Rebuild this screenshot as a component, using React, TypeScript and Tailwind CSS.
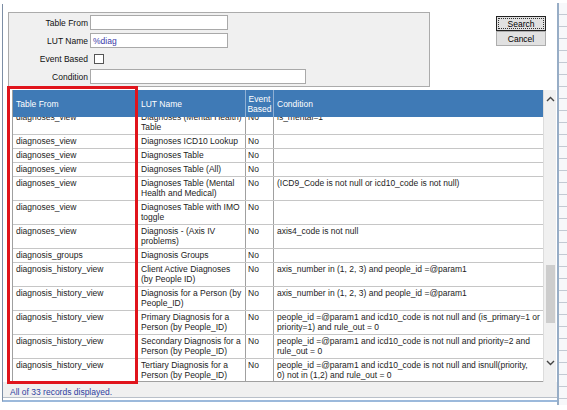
import React from 'react';

type Row = { table: string; lut: string; event: string; cond: string };

const rows: Row[] = [
  { table: 'diagnoses_view', lut: 'Diagnoses (Mental Health) Table', event: 'No', cond: 'is_mental=1' },
  { table: 'diagnoses_view', lut: 'Diagnoses ICD10 Lookup', event: 'No', cond: '' },
  { table: 'diagnoses_view', lut: 'Diagnoses Table', event: 'No', cond: '' },
  { table: 'diagnoses_view', lut: 'Diagnoses Table (All)', event: 'No', cond: '' },
  {
    table: 'diagnoses_view',
    lut: 'Diagnoses Table (Mental Health and Medical)',
    event: 'No',
    cond: '(ICD9_Code is not null or icd10_code is not null)',
  },
  { table: 'diagnoses_view', lut: 'Diagnoses Table with IMO toggle', event: 'No', cond: '' },
  { table: 'diagnoses_view', lut: 'Diagnosis - (Axis IV problems)', event: 'No', cond: 'axis4_code is not null' },
  { table: 'diagnosis_groups', lut: 'Diagnosis Groups', event: 'No', cond: '' },
  {
    table: 'diagnosis_history_view',
    lut: 'Client Active Diagnoses (by People ID)',
    event: 'No',
    cond: 'axis_number in (1, 2, 3) and people_id =@param1',
  },
  {
    table: 'diagnosis_history_view',
    lut: 'Diagnosis for a Person (by People_ID)',
    event: 'No',
    cond: 'axis_number in (1, 2, 3) and people_id =@param1',
  },
  {
    table: 'diagnosis_history_view',
    lut: 'Primary Diagnosis for a Person (by People_ID)',
    event: 'No',
    cond: 'people_id =@param1 and icd10_code is not null and (is_primary=1 or priority=1) and rule_out = 0',
  },
  {
    table: 'diagnosis_history_view',
    lut: 'Secondary Diagnosis for a Person (by People_ID)',
    event: 'No',
    cond: 'people_id =@param1 and icd10_code is not null and priority=2 and rule_out = 0',
  },
  {
    table: 'diagnosis_history_view',
    lut: 'Tertiary Diagnosis for a Person (by People_ID)',
    event: 'No',
    cond: 'people_id =@param1 and icd10_code is not null and isnull(priority,\n0) not in (1,2) and rule_out = 0',
  },
];

const Field = ({ label, children }: { label: string; children: React.ReactNode }) => (
  <div className="flex items-center h-[15px]">
    <span className="w-[81px] text-right pr-[2px] text-[#111]">{label}</span>
    {children}
  </div>
);

export default function App() {
  return (
    <div className="relative w-[567px] h-[410px] bg-white overflow-hidden font-['Liberation_Sans',Arial,sans-serif] text-[8.5px] leading-[10px] text-[#1c1c1c]">
      <div className="flex h-full">
        {/* dialog */}
        <div className="w-[557px] pt-[4px] pl-[2px]">
          <div className="border-l border-b-2 border-l-[#7d8ea5] border-b-[#9cb9db] h-[398px] flex flex-col">
            {/* search panel + buttons */}
            <div className="flex pt-[8px] pl-[5px]">
              <div className="w-[422px] h-[75px] bg-[#f0f0f0] border border-[#ababab] pt-[2px] flex flex-col gap-[3px]">
                <Field label="Table From">
                  <div className="w-[138px] h-[15px] bg-white border border-[#a9a9a9]" />
                </Field>
                <Field label="LUT Name">
                  <div className="w-[138px] h-[15px] bg-white border border-[#a9a9a9] px-[2px] text-[#3a3aa8] flex items-center">
                    %diag
                  </div>
                </Field>
                <Field label="Event Based">
                  <div className="ml-[4px] w-[10px] h-[10px] bg-white border border-[#555]" />
                </Field>
                <Field label="Condition">
                  <div className="w-[216px] h-[15px] bg-white border border-[#a9a9a9]" />
                </Field>
              </div>
              <div className="ml-[66px] mt-[4px] w-[50px] flex flex-col">
                <button className="h-[15px] bg-[#e1e1e1] border border-[#222] p-[1px] text-black">
                  <span className="flex h-full items-center justify-center border border-dotted border-[#333]">
                    Search
                  </span>
                </button>
                <button className="h-[15px] bg-[#e1e1e1] border border-[#adadad] text-black flex items-center justify-center">
                  Cancel
                </button>
              </div>
            </div>

            {/* grid */}
            <div className="flex mt-[3px] ml-[9px] h-[292px]">
              <div className="w-[531px] flex flex-col border-l border-[#a0a0a0]">
                <div className="h-[27px] bg-[#3f7ab6] text-white grid grid-cols-[124px_109px_28px_1fr]">
                  <div className="flex items-center pl-[3px] border-r border-[#8fb0d4]">Table From</div>
                  <div className="flex items-center pl-[4px] border-r border-[#8fb0d4]">LUT Name</div>
                  <div className="flex items-center justify-center text-center border-r border-[#8fb0d4]">
                    Event
                    <br />
                    Based
                  </div>
                  <div className="flex items-center pl-[3px]">Condition</div>
                </div>
                <div className="flex-1 overflow-hidden border-b border-[#a0a0a0]">
                  <div className="-mt-[6px]">
                    {rows.map((r, i) => (
                      <div
                        key={i}
                        className="grid grid-cols-[124px_109px_28px_1fr] border-b border-[#c6c6c6]"
                      >
                        <div className="pl-[3px] pt-[1px] pb-[2px] border-r border-[#a0a0a0]">{r.table}</div>
                        <div className="pl-[4px] pr-[1px] pt-[1px] pb-[2px] border-r border-[#a0a0a0]">{r.lut}</div>
                        <div className="pl-[2px] pt-[1px] pb-[2px] border-r border-[#a0a0a0]">{r.event}</div>
                        <div className="pl-[3px] pr-[2px] pt-[1px] pb-[2px] whitespace-pre-line">{r.cond}</div>
                      </div>
                    ))}
                  </div>
                </div>
              </div>
              {/* vertical scrollbar */}
              <div className="w-[13px] h-[292px] bg-[#f0f0f0] border-l border-[#dcdcdc] flex flex-col items-center">
                <svg width="9" height="14" viewBox="0 0 9 14" className="mt-[2px]">
                  <path d="M1 9 L4.5 5.5 L8 9" fill="none" stroke="#444" strokeWidth="1.4" />
                </svg>
                <div className="mt-[159px] w-[9px] h-[58px] bg-[#cdcdcd]" />
                <svg width="9" height="14" viewBox="0 0 9 14" className="mt-[33px]">
                  <path d="M1 5 L4.5 8.5 L8 5" fill="none" stroke="#444" strokeWidth="1.4" />
                </svg>
              </div>
            </div>

            {/* status */}
            <div className="h-[16px] bg-[#f0f0f0] border-b border-[#b9c0c9] pl-[7px] pt-[5px] text-[#2e3fa0]">
              All of 33 records displayed.
            </div>
          </div>
        </div>

        {/* background window edge */}
        <div className="pt-[3px] flex">
          <div className="w-[2px] h-[402px] bg-[#97adc6]" />
          <div className="w-[8px] h-[402px] bg-[repeating-linear-gradient(to_bottom,#f7f8fa_0px,#f7f8fa_11px,#c3cad3_11px,#c3cad3_12px)]" />
        </div>
      </div>

      {/* red highlight around the Table From column */}
      <div className="absolute left-[7px] top-[86px] w-[131px] h-[298px] border-[3px] border-[#e0141c]" />
    </div>
  );
}
